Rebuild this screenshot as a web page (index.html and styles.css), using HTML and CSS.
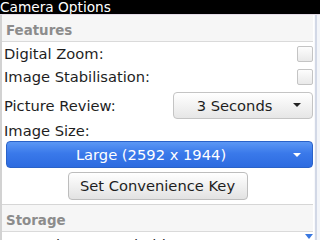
FILE: index.html
```html
<!DOCTYPE html>
<html>
<head>
<meta charset="utf-8">
<link rel="stylesheet" href="styles.css">
</head>
<body>
<div class="title">Camera Options</div>
<div class="screen">
  <div class="main">
    <div class="section-head">Features</div>
    <div class="row"><span class="label">Digital Zoom:</span><span class="checkbox"></span></div>
    <div class="row"><span class="label">Image Stabilisation:</span><span class="checkbox"></span></div>
    <div class="row row-select"><span class="label">Picture Review:</span><div class="select select-small"><span class="select-text">3 Seconds</span><span class="arrow"></span></div></div>
    <div class="label-row">Image Size:</div>
    <div class="select select-wide"><span class="select-text">Large (2592 x 1944)</span><span class="arrow arrow-white"></span></div>
    <div class="button-row"><div class="btn">Set Convenience Key</div></div>
    <div class="section-head section-storage">Storage</div>
    <div class="row-partial">Store Pictures and Videos:</div>
  </div>
  <div class="track"></div>
  <span class="scroll-down"></span>
</div>
</body>
</html>
```

FILE: styles.css
```css
html, body {
  margin: 0;
  padding: 0;
  background: #fff;
}
body {
  width: 320px;
  height: 240px;
  overflow: hidden;
  font-family: "DejaVu Sans", "Liberation Sans", sans-serif;
  color: #1e1e1e;
}
.title {
  height: 14px;
  background: #000;
  color: #fff;
  font-size: 13.7px;
  line-height: 14px;
  white-space: nowrap;
}
.screen {
  position: relative;
  display: flex;
  height: 225px;
  border-top: 1px solid #e4dce8;
}
.main {
  flex: 1;
  border-left: 2px solid #d2d2d2;
  padding-right: 1px;
  overflow: hidden;
}
.track {
  width: 6px;
  background: linear-gradient(to right, #f7f8fb 1px, #d2d8e6 1px, #d2d8e6 3px, #f3f5f9 3px);
}
.scroll-down {
  position: absolute;
  right: 7px;
  bottom: 1px;
  width: 0;
  height: 0;
  border-left: 4px solid transparent;
  border-right: 4px solid transparent;
  border-top: 5px solid #3a78e0;
}
.section-head {
  height: 23px;
  padding-top: 3px;
  line-height: 25px;
  background: #f6f6f6;
  border-bottom: 1px solid #dadada;
  padding-left: 4px;
  font-size: 13.4px;
  font-weight: bold;
  color: #8c8c8c;
}
.section-storage {
  margin-top: 4px;
  border-top: 1px solid #d6d6d6;
}
.row {
  height: 23px;
  display: flex;
  align-items: center;
  justify-content: space-between;
  padding-left: 2px;
  font-size: 14.7px;
  white-space: nowrap;
}
.row-select {
  height: 34px;
}
.row-partial {
  padding-top: 4px;
  padding-left: 2px;
  line-height: 17px;
  font-size: 14.7px;
  white-space: nowrap;
}
.checkbox {
  width: 14px;
  height: 14px;
  border: 1px solid #c4c4c4;
  border-radius: 2px;
  background: linear-gradient(#fdfdfd, #e9e9e9);
}
.label-row {
  height: 18px;
  line-height: 18px;
  padding-left: 2px;
  font-size: 14.7px;
}
.select {
  display: flex;
  align-items: center;
  height: 25px;
  border: 1px solid #c4c4c4;
  border-radius: 4px;
  background: linear-gradient(#ffffff, #e6e6e6);
  font-size: 14.7px;
  white-space: nowrap;
  padding-left: 6px;
}
.select-small {
  width: 132px;
}
.select-text {
  flex: 1;
  text-align: center;
}
.arrow {
  width: 0;
  height: 0;
  margin-right: 11px;
  margin-left: 4px;
  border-left: 4px solid transparent;
  border-right: 4px solid transparent;
  border-top: 4px solid #222;
}
.select-wide {
  margin-left: 4px;
  margin-top: 1px;
  border-color: #2a62c8;
  background: linear-gradient(#5b97f5, #3a79ea 45%, #2d6be0);
  color: #fff;
}
.arrow-white {
  border-top-color: #fff;
}
.button-row {
  display: flex;
  justify-content: center;
  margin-top: 4px;
}
.btn {
  width: 178px;
  height: 26px;
  line-height: 26px;
  text-align: center;
  border: 1px solid #bdbdbd;
  border-radius: 4px;
  background: linear-gradient(#ffffff, #e2e2e2);
  font-size: 14.7px;
  white-space: nowrap;
}
```
